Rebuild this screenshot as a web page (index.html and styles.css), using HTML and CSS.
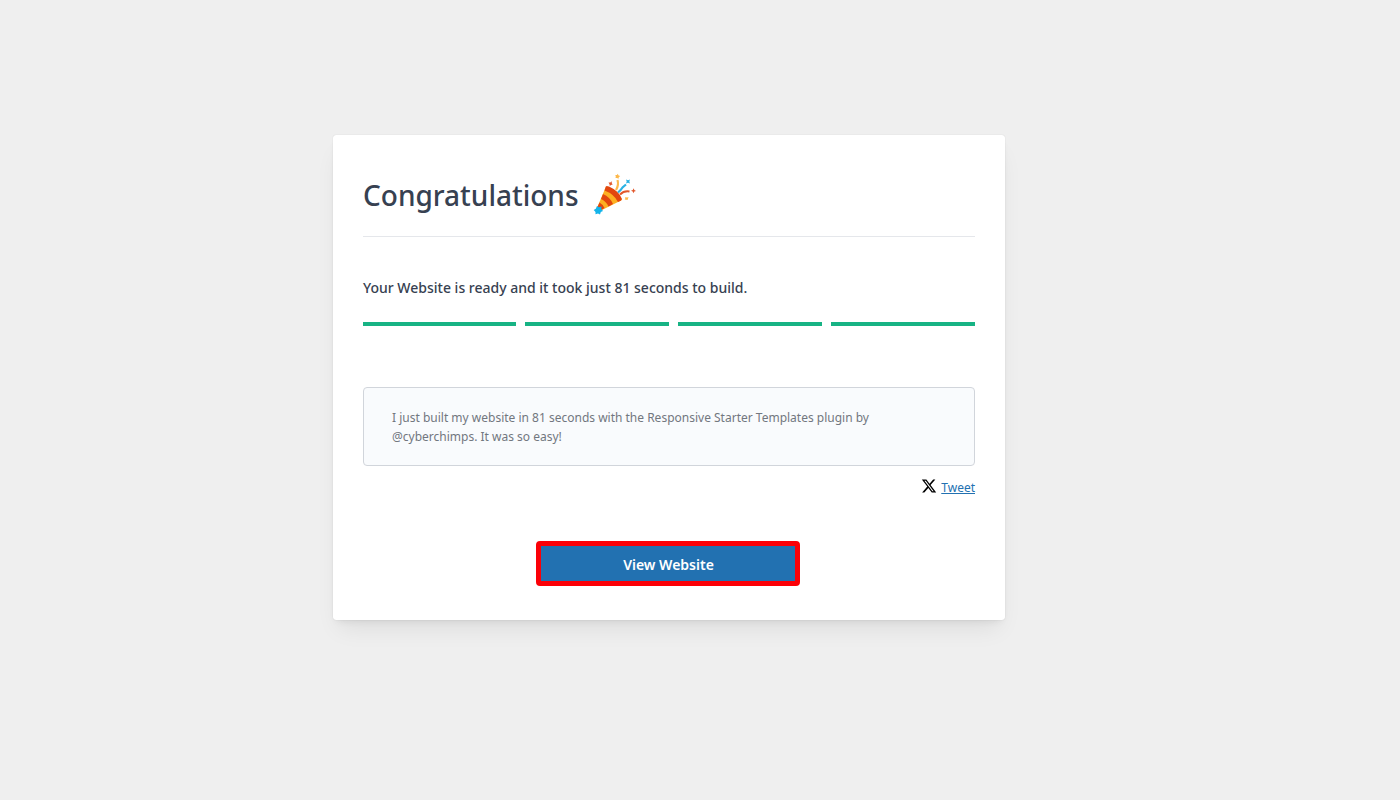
FILE: index.html
```html
<!DOCTYPE html>
<html lang="en">
<head>
<meta charset="utf-8">
<meta name="viewport" content="width=device-width, initial-scale=1">
<title>Congratulations</title>
<link rel="stylesheet" href="styles.css">
</head>
<body>
<main class="page">
  <section class="card">
    <header class="card-header">
      <h1 class="title">Congratulations</h1>
      <svg class="popper" viewBox="0 0 44 44" aria-hidden="true">
        <path fill="#fdb022" d="M13 13.500 L4 35 L7 38 L29 27 Q24 18 13 13.500 Z"/>
        <path fill="#e2470f" d="M12.500 14.500 Q12.500 12 16 13.500 Q26 18 29 26 Q28.500 28 25 29 Q21 21 11.500 17.500 Z"/>
        <path fill="#e2470f" d="M10 21 Q17 24 20 31 L15.500 33.500 Q13 28 8 26 Z"/>
        <path fill="#e2470f" d="M6.500 29.500 Q10 31.500 11.500 35 L7 38 L4 35 Z"/>
        <path fill="#14b4ea" d="M4 33 L6 34.200 L8.500 33.500 L8.300 36 L10 38 L7.800 39 L7 41.500 L5 40.500 L2.500 41.200 L2.500 39 L.7 37 L2.800 35.800 Z"/>
        <path fill="none" stroke="#fdb84a" stroke-width="2.200" d="M23 17 Q26 12 24.500 7"/>
        <path fill="none" stroke="#2ab2e4" stroke-width="2.200" d="M25 19.500 Q28 17 29.500 14.500 L33 11.500"/>
        <path fill="none" stroke="#e2572b" stroke-width="2" d="M27 21.500 Q31 17.500 36.500 18.500"/>
        <path fill="#fdb84a" d="M24.700 .8 L25.600 2.500 L27.200 3 L25.800 4.200 L25.500 5.800 L24 5 L22.500 5 L22.800 3.500 L22.300 2 L24 2 Z"/>
        <path fill="#2ab2e4" d="M33 6.500 L35 7.200 L37 6.500 L36.300 8.500 L37 10.500 L35 9.800 L33 10.500 L33.700 8.500 Z"/>
        <path fill="#e2572b" d="M15.500 9.500 L17.300 9.500 L18.700 8.300 L18.800 10.200 L19.700 11.500 L18 12 L16.800 13 L16.500 11.200 Z M40.700 15.300 L41.300 17.100 L43 18 L41.300 18.600 L40.500 20.200 L39.700 18.600 L38 17.800 L39.800 17.100 Z"/>
        <path fill="#fdb84a" d="M32.300 24 L34 24.500 L35.500 24 L35 25.700 L34.500 27 L33 26.700 L31.700 26.500 L32.300 25.300 Z"/>
      </svg>
    </header>
    <p class="message">Your Website is ready and it took just 81 seconds to build.</p>
    <div class="steps">
      <span class="step"></span>
      <span class="step"></span>
      <span class="step"></span>
      <span class="step"></span>
    </div>
    <p class="quote">I just built my website in 81 seconds with the Responsive Starter Templates plugin by @cyberchimps. It was so easy!</p>
    <div class="share">
      <svg class="x-logo" viewBox="0 0 24 24" aria-hidden="true"><path d="M18.244 2.25h3.308l-7.227 8.26 8.502 11.24H16.17l-5.214-6.817L4.99 21.75H1.68l7.73-8.835L1.254 2.25H8.08l4.713 6.231zm-1.161 17.52h1.833L7.084 4.126H5.117z"/></svg>
      <a class="tweet" href="#">Tweet</a>
    </div>
    <button class="view" type="button">View Website</button>
  </section>
</main>
</body>
</html>
```
FILE: styles.css
```css
* { box-sizing: border-box; }

body {
  margin: 0;
  background: #efefef;
  color: #374151;
  font-family: "Noto Sans", "Open Sans", sans-serif;
}

.page {
  display: flex;
  justify-content: center;
  padding: 135px 62px 48px 0;
}

.card {
  display: flex;
  flex-direction: column;
  width: 100%;
  max-width: 672px;
  padding: 30px 30px 34px;
  background: #fff;
  border-radius: 3px;
  box-shadow: 0 0 1px rgba(0, 0, 0, .2), 0 14px 22px -6px rgba(0, 0, 0, .08), 0 4px 8px -4px rgba(0, 0, 0, .1);
}

.card-header {
  display: flex;
  align-items: center;
  gap: 14px;
  height: 72px;
  padding-bottom: 12px;
  border-bottom: 1px solid #e5e7eb;
}

.title {
  margin: 0;
  font-size: 28px;
  line-height: 40px;
  font-weight: 500;
}

.popper {
  width: 44px;
  height: 44px;
}

.message {
  margin: 40px 0 0;
  font-size: 14px;
  line-height: 22px;
  font-weight: 500;
}

.steps {
  display: grid;
  grid-template-columns: repeat(4, 1fr);
  margin-top: 23px;
}

.step {
  height: 4px;
  background: #17b384;
}

.step + .step { margin-left: 9px; }

.quote {
  margin: 61px 0 0;
  padding: 20px 28px 19px;
  border: 1px solid #d1d5db;
  border-radius: 4px;
  background: #f9fbfd;
  color: #72777f;
  font-size: 12px;
  line-height: 19px;
}

.share {
  display: flex;
  justify-content: flex-end;
  align-items: center;
  gap: 4px;
  margin-top: 12px;
}

.x-logo {
  width: 16px;
  height: 16px;
  margin-bottom: 4px;
}

.tweet {
  color: #2271b1;
  font-size: 12px;
  line-height: 20px;
}

.view {
  align-self: center;
  width: 264px;
  height: 45px;
  margin: 43px 3px 0 0;
  padding: 2px 0 0 2px;
  border: 5px solid #fb0007;
  border-radius: 4px;
  background: #2271b1;
  color: #fff;
  font: inherit;
  font-size: 14px;
  font-weight: 600;
}
```
